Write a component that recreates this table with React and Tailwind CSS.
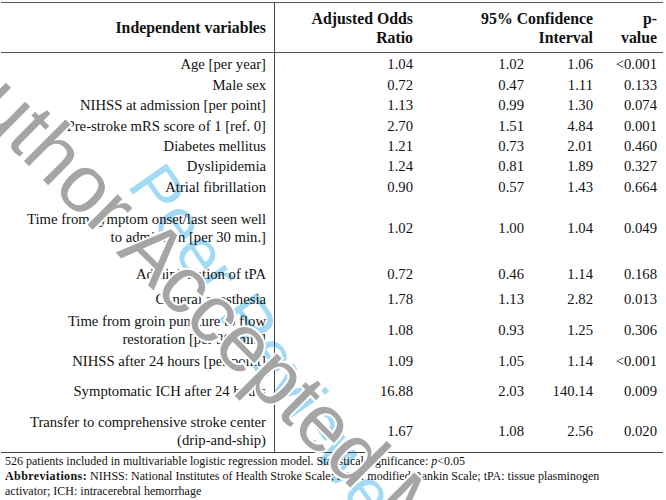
import React from 'react';

const rows = [
  { label: ['Age [per year]'], or: '1.04', lo: '1.02', hi: '1.06', p: '<0.001', h: 'h-[22px]' },
  { label: ['Male sex'], or: '0.72', lo: '0.47', hi: '1.11', p: '0.133', h: 'h-[20px]' },
  { label: ['NIHSS at admission [per point]'], or: '1.13', lo: '0.99', hi: '1.30', p: '0.074', h: 'h-[20px]' },
  { label: ['Pre-stroke mRS score of 1 [ref. 0]'], or: '2.70', lo: '1.51', hi: '4.84', p: '0.001', h: 'h-[21px]' },
  { label: ['Diabetes mellitus'], or: '1.21', lo: '0.73', hi: '2.01', p: '0.460', h: 'h-[20px]' },
  { label: ['Dyslipidemia'], or: '1.24', lo: '0.81', hi: '1.89', p: '0.327', h: 'h-[20px]' },
  { label: ['Atrial fibrillation'], or: '0.90', lo: '0.57', hi: '1.43', p: '0.664', h: 'h-[21px]' },
  { label: ['Time from symptom onset/last seen well', 'to admission [per 30 min.]'], or: '1.02', lo: '1.00', hi: '1.04', p: '0.049', h: 'h-[62px]' },
  { label: ['Administration of tPA'], or: '0.72', lo: '0.46', hi: '1.14', p: '0.168', h: 'h-[29px]' },
  { label: ['General anesthesia'], or: '1.78', lo: '1.13', hi: '2.82', p: '0.013', h: 'h-[22px]' },
  { label: ['Time from groin puncture to flow', 'restoration [per 30 min.]'], or: '1.08', lo: '0.93', hi: '1.25', p: '0.306', h: 'h-[39px]' },
  { label: ['NIHSS after 24 hours [per point]'], or: '1.09', lo: '1.05', hi: '1.14', p: '<0.001', h: 'h-[23px]' },
  { label: ['Symptomatic ICH after 24 hours'], or: '16.88', lo: '2.03', hi: '140.14', p: '0.009', h: 'h-[38px]' },
  { label: ['Transfer to comprehensive stroke center', '(drip-and-ship)'], or: '1.67', lo: '1.08', hi: '2.56', p: '0.020', h: 'h-[42px]' },
];

const cell = 'flex items-center justify-end text-right';

export default function App() {
  return (
    <div className="relative w-[666px] h-[500px] overflow-hidden bg-white text-[#111] [font-family:Liberation_Serif,Times_New_Roman,serif]">
      {/* blue watermark sits under the table text */}
      <div className="absolute left-[172px] top-[153px] origin-top-left rotate-[55deg] whitespace-nowrap [font-family:Liberation_Sans,Arial,sans-serif] text-[66px] leading-none text-[#a2daf6]">
        Peer Reviewed
      </div>

      <div className="relative w-[662px] ml-[1px] mt-[2px] border-t border-[#555] text-[14.7px] leading-[18px]">
        {/* header */}
        <div className="grid grid-cols-[274px_146px_111px_69px_62px] h-[50px] border-b border-[#555] font-bold text-[15.8px] leading-[19px]">
          <div className={`${cell} pr-[8px] border-r border-[#444]`}>Independent variables</div>
          <div className={`${cell} pr-[8px]`}>
            <span>Adjusted Odds<br />Ratio</span>
          </div>
          <div className={`${cell} col-span-2 pr-[8px]`}>
            <span>95% Confidence<br />Interval</span>
          </div>
          <div className={`${cell} pr-[6px]`}>
            <span>p-<br />value</span>
          </div>
        </div>
        {/* body */}
        {rows.map((r, i) => (
          <div key={i} className={`grid grid-cols-[274px_146px_111px_69px_62px] ${r.h}`}>
            <div className={`${cell} pr-[8px] border-r border-[#444]`}>
              <span>
                {r.label.map((l, j) => (
                  <span key={j} className="block">{l}</span>
                ))}
              </span>
            </div>
            <div className={`${cell} pr-[8px]`}>{r.or}</div>
            <div className={`${cell} pr-[8px]`}>{r.lo}</div>
            <div className={`${cell} pr-[8px]`}>{r.hi}</div>
            <div className={`${cell} pr-[6px]`}>{r.p}</div>
          </div>
        ))}
      </div>
      {/* footnote */}
      <div className="relative w-[662px] ml-[1px] border-t border-[#444] pl-[4px] pt-[1px] text-[12px] leading-[15px]">
        <p>526 patients included in multivariable logistic regression model. Statistical significance: <i>p</i>&lt;0.05</p>
        <p className="max-w-[620px]">
          <b className="tracking-[0.4px]">Abbreviations:</b> NIHSS: National Institutes of Health Stroke Scale; mRS: modified Rankin Scale; tPA: tissue plasminogen activator; ICH: intracerebral hemorrhage
        </p>
      </div>

      {/* grey watermark on top, white halo knocks out the text below */}
      <div className="absolute left-[-18px] top-[23px] origin-top-left rotate-[45deg] whitespace-nowrap [font-family:Liberation_Sans,Arial,sans-serif] text-[81px] leading-none text-[#a5a5a5] [-webkit-text-stroke:4px_white] [paint-order:stroke_fill]">
        Author Accepted Manuscript
      </div>
    </div>
  );
}
